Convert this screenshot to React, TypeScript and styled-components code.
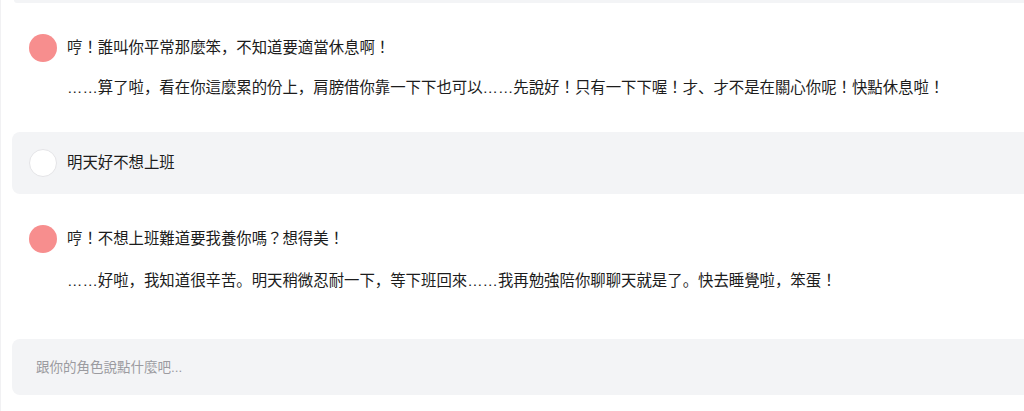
import React from 'react';
import styled, {createGlobalStyle} from "styled-components";

const GlobalStyle = createGlobalStyle`
  html, body {
    margin: 0;
    padding: 0;
    background: #ffffff;
    overflow: hidden;
  }
  body {
    font-family: "Liberation Sans", "Noto Sans CJK JP", "Noto Sans CJK TC", sans-serif;
    color: #1c1c1c;
    text-spacing-trim: space-all;
  }
`

const Page = styled.div`
  width: calc(100% + 16px);
  box-sizing: border-box;
  padding: 0 0 0 11px;
  border-left: 1px solid #f1f1f3;
  min-height: 411px;
`
const ChatList = styled.div`
  display: flex;
  flex-direction: column;
  gap: 14px;
`
const PrevTail = styled.div`
  height: 3px;
  background: #f3f4f6;
  border-radius: 0 0 0 6px;
  margin-left: 2px;
`
const Message = styled.div<{ $user?: boolean }>`
  display: flex;
  align-items: flex-start;
  gap: 10px;
  padding: 17px;
  border-radius: 8px;
  background: ${p => p.$user ? '#f3f4f6' : 'transparent'};
`
const Avatar = styled.div<{ $user?: boolean }>`
  width: 28px;
  height: 28px;
  flex-shrink: 0;
  box-sizing: border-box;
  border-radius: 50%;
  background: ${p => p.$user ? '#ffffff' : '#f78e8e'};
  border: ${p => p.$user ? '1px solid #e4e4e7' : 'none'};
`
const Body = styled.div<{ $tall?: boolean }>`
  display: flex;
  flex-direction: column;
  gap: ${p => p.$tall ? '16px' : '14px'};
  padding-top: 1px;
`
const Para = styled.p`
  margin: 0;
  font-size: 15.4px;
  line-height: 26px;
  color: #1c1c1c;
  white-space: nowrap;
  text-spacing-trim: space-all;
`
const Composer = styled.div`
  margin-top: 28px;
  height: 56px;
  box-sizing: border-box;
  padding: 0 24px;
  display: flex;
  align-items: center;
  background: #f3f4f6;
  border-radius: 8px;
`
const Input = styled.input`
  flex: 1;
  border: none;
  outline: none;
  background: transparent;
  font-family: "Liberation Sans", "Noto Sans CJK JP", sans-serif;
  font-size: 13.5px;
  color: #222222;
  padding: 0;
  &::placeholder {
    color: #9b9ba0;
  }
`

interface chatMessage {
    id: number
    user?: boolean
    tall?: boolean
    lines: string[]
}

const messages: chatMessage[] = [
    {
        id: 1,
        lines: [
            "哼！誰叫你平常那麼笨，不知道要適當休息啊！",
            "……算了啦，看在你這麼累的份上，肩膀借你靠一下下也可以……先說好！只有一下下喔！才、才不是在關心你呢！快點休息啦！"
        ]
    },
    {id: 2, user: true, lines: ["明天好不想上班"]},
    {
        id: 3,
        tall: true,
        lines: [
            "哼！不想上班難道要我養你嗎？想得美！",
            "……好啦，我知道很辛苦。明天稍微忍耐一下，等下班回來……我再勉強陪你聊聊天就是了。快去睡覺啦，笨蛋！"
        ]
    }
]

const App = () => {
    return (
        <Page>
            <GlobalStyle/>
            <ChatList>
                <PrevTail/>
                {messages.map(msg => (
                    <Message key={msg.id} $user={msg.user}>
                        <Avatar $user={msg.user}/>
                        <Body $tall={msg.tall}>
                            {msg.lines.map((line, i) => <Para key={i}>{line}</Para>)}
                        </Body>
                    </Message>
                ))}
            </ChatList>
            <Composer>
                <Input type="text" placeholder="跟你的角色說點什麼吧..."/>
            </Composer>
        </Page>
    );
};

export default App;
